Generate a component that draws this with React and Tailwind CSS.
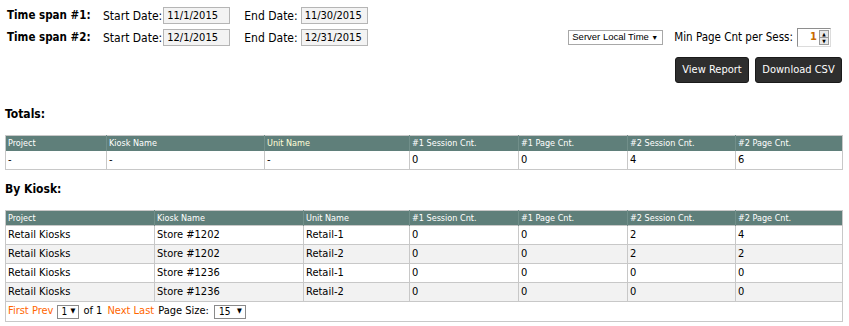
import React from "react";

const totalsCols = [
  { label: "Project", w: "w-[101px]" },
  { label: "Kiosk Name", w: "w-[158px]" },
  { label: "Unit Name", w: "w-[145px]", hl: true },
  { label: "#1 Session Cnt.", w: "w-[109px]" },
  { label: "#1 Page Cnt.", w: "w-[109px]" },
  { label: "#2 Session Cnt.", w: "w-[108px]" },
  { label: "#2 Page Cnt.", w: "" },
];

const kioskCols = [
  { label: "Project", w: "w-[149px]" },
  { label: "Kiosk Name", w: "w-[149px]" },
  { label: "Unit Name", w: "w-[106px]" },
  { label: "#1 Session Cnt.", w: "w-[109px]" },
  { label: "#1 Page Cnt.", w: "w-[109px]" },
  { label: "#2 Session Cnt.", w: "w-[108px]" },
  { label: "#2 Page Cnt.", w: "" },
];

const kioskRows = [
  ["Retail Kiosks", "Store #1202", "Retail-1", "0", "0", "2", "4"],
  ["Retail Kiosks", "Store #1202", "Retail-2", "0", "0", "2", "2"],
  ["Retail Kiosks", "Store #1236", "Retail-1", "0", "0", "0", "0"],
  ["Retail Kiosks", "Store #1236", "Retail-2", "0", "0", "0", "0"],
];

function DateBox({ value }) {
  return (
    <div className="w-[67px] h-[17px] border border-[#b5b5b5] bg-[#f3f3f3] text-[11px] leading-[15px] pl-[3px] text-black">
      {value}
    </div>
  );
}

function Caret() {
  return <span className="text-[7px] leading-none">▼</span>;
}

function Header({ cols }) {
  return (
    <thead>
      <tr className="bg-[#5f7f7a] h-[15px]">
        {cols.map((c) => (
          <th
            key={c.label}
            className={`${c.w} text-left font-normal text-[9px] leading-[13px] pl-[2px] border-l border-[#718f8a] first:border-l-0 ${c.hl ? "text-[#ffffd8]" : "text-white"}`}
          >
            {c.label}
          </th>
        ))}
      </tr>
    </thead>
  );
}

function Cell({ children }) {
  return (
    <td className="border-l border-[#c8c8c8] first:border-l-0 pl-[2px] text-[11px] leading-[18px] text-black">
      {children}
    </td>
  );
}

function SpanRow({ n, start, end }) {
  return (
    <div className="flex items-center whitespace-nowrap">
      <span className="font-bold w-[98px] shrink-0 pl-[2px] text-[11.5px]">Time span #{n}:</span>
      <span className="mr-[1px]">Start Date:</span>
      <DateBox value={start} />
      <span className="ml-[14px] mr-[3px]">End Date:</span>
      <DateBox value={end} />
    </div>
  );
}

export default function App() {
  return (
    <div className="w-[849px] h-[326px] bg-white text-black font-['DejaVu_Sans_Condensed','DejaVu_Sans',sans-serif] px-[5px] pr-[6px] pt-[7px]">
      {/* date spans */}
      <div className="flex items-center h-[17px] text-[12px]">
        <SpanRow n={1} start="11/1/2015" end="11/30/2015" />
      </div>
      <div className="flex items-center justify-between h-[19px] mt-[4px] text-[12px]">
        <SpanRow n={2} start="12/1/2015" end="12/31/2015" />
        <div className="flex items-center mr-[12px] whitespace-nowrap">
          <div className="flex items-center justify-between w-[95px] h-[15px] border border-[#a8a8a8] pl-[3px] pr-[4px] text-[9.5px] font-['Liberation_Sans',sans-serif]">
            <span>Server Local Time</span>
            <Caret />
          </div>
          <span className="ml-[11px] mr-[4px] text-[11.5px]">Min Page Cnt per Sess:</span>
          <div className="flex items-center w-[34px] h-[19px] border border-[#8e8e8e] border-r-[#dcdcdc] border-b-[#dcdcdc]">
            <span className="flex-1 text-right pr-[2px] text-[11px] text-[#c86a00] font-bold">1</span>
            <div className="flex flex-col w-[10px] h-[15px] mr-[1px]">
              <div className="flex-1 bg-[#e8e8e8] border border-[#9a9a9a] flex items-center justify-center text-[5px] leading-none">▲</div>
              <div className="flex-1 bg-[#e8e8e8] border border-[#9a9a9a] border-t-0 flex items-center justify-center text-[5px] leading-none">▼</div>
            </div>
          </div>
        </div>
      </div>

      {/* buttons */}
      <div className="flex justify-end gap-[6px] mt-[10px] mr-[1px]">
        <button className="w-[74px] h-[26px] rounded-[3px] bg-[#2e2e2e] border border-[#1a1a1a] text-white text-[11px]">
          View Report
        </button>
        <button className="w-[87px] h-[26px] rounded-[3px] bg-[#2e2e2e] border border-[#1a1a1a] text-white text-[11px]">
          Download CSV
        </button>
      </div>

      {/* totals */}
      <div className="font-bold text-[12px] mt-[22px] h-[16px]">Totals:</div>
      <table className="w-[838px] mt-[14px] border-collapse border border-[#c8c8c8] table-fixed">
        <Header cols={totalsCols} />
        <tbody>
          <tr className="h-[19px] bg-white">
            <Cell>-</Cell>
            <Cell>-</Cell>
            <Cell>-</Cell>
            <Cell>0</Cell>
            <Cell>0</Cell>
            <Cell>4</Cell>
            <Cell>6</Cell>
          </tr>
        </tbody>
      </table>

      {/* by kiosk */}
      <div className="font-bold text-[12px] mt-[10px] h-[16px]">By Kiosk:</div>
      <table className="w-[838px] mt-[14px] border-collapse border border-[#c8c8c8] table-fixed">
        <Header cols={kioskCols} />
        <tbody>
          {kioskRows.map((r, i) => (
            <tr key={i} className={`h-[19px] border-t border-[#c8c8c8] ${i % 2 ? "bg-[#f2f2f2]" : "bg-white"}`}>
              {r.map((v, j) => (
                <Cell key={j}>{v}</Cell>
              ))}
            </tr>
          ))}
          <tr className="h-[20px] border-t border-[#c8c8c8]">
            <td colSpan={7} className="pl-[2px] text-[11px]">
              <div className="flex items-center whitespace-nowrap">
                <span className="text-[#ff6600]">First Prev</span>
                <div className="ml-[4px] flex items-center justify-between w-[22px] h-[14px] border border-[#8a8a8a] pl-[3px] pr-[3px] text-[10px]">
                  <span>1</span>
                  <Caret />
                </div>
                <span className="ml-[4px]">of 1</span>
                <span className="ml-[5px] text-[#ff6600]">Next Last</span>
                <span className="ml-[4px]">Page Size:</span>
                <div className="ml-[5px] flex items-center justify-between w-[32px] h-[14px] border border-[#8a8a8a] pl-[4px] pr-[3px] text-[10px]">
                  <span>15</span>
                  <Caret />
                </div>
              </div>
            </td>
          </tr>
        </tbody>
      </table>
    </div>
  );
}
